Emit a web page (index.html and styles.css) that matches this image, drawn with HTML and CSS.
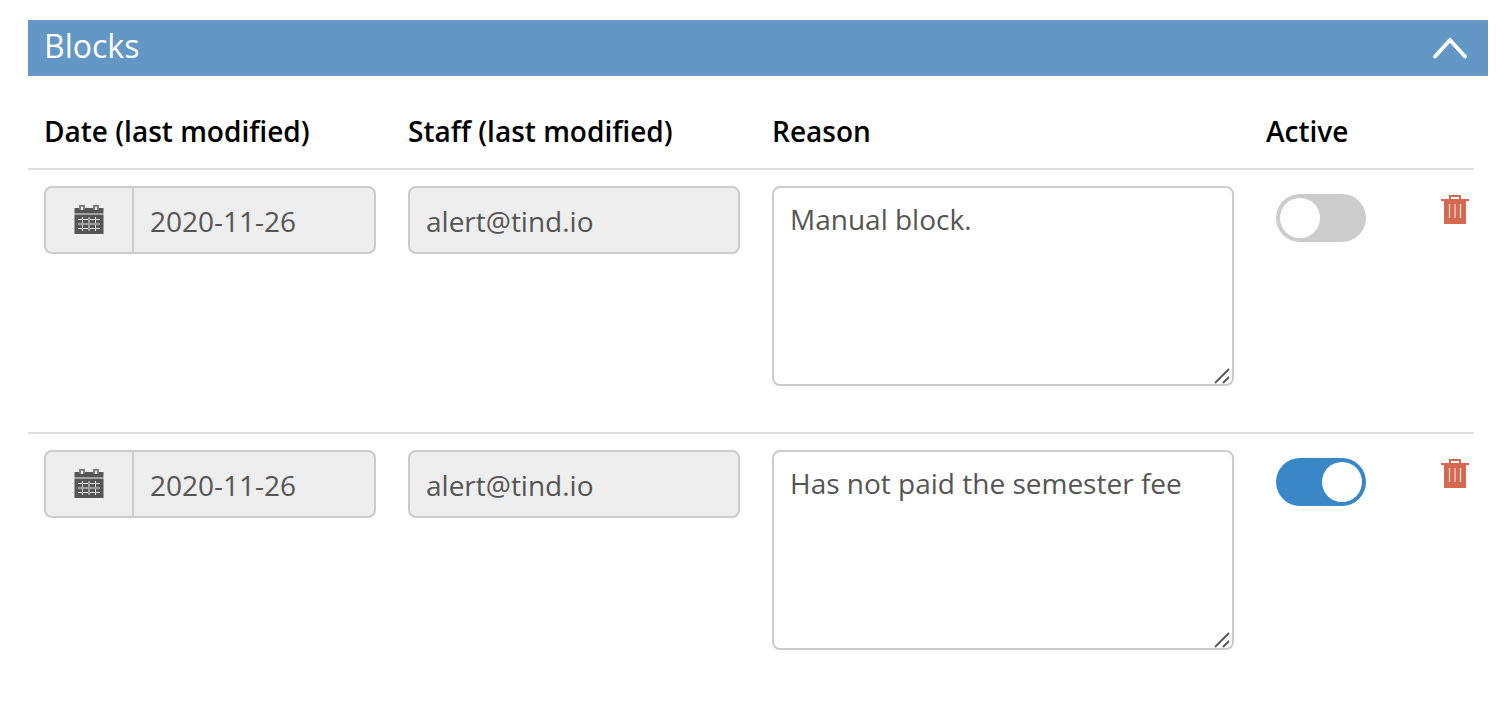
FILE: index.html
```html
<!DOCTYPE html>
<html lang="en">
<head>
    <meta charset="utf-8">
    <title>Blocks</title>
    <link rel="stylesheet" href="styles.css">
</head>
<body>
    <!-- Shared icons -->
    <svg class="icon-defs" aria-hidden="true">
        <symbol id="icon-calendar" viewBox="0 0 30 30">
            <path d="M0.5 4H29.5V9.5H0.5Z" fill="#555"/>
            <path d="M0.5 10.5H29.5V30H0.5Z" fill="#555"/>
            <path d="M6 6V1.8H10V6M20 6V1.8H24V6" fill="#eee" stroke="#777" stroke-width="1.8"/>
            <path d="M7 3H9V6H7ZM21 3H23V6H21Z" fill="#eee"/>
            <path d="M4 15.5H26M4 24.5H26M8.5 13V27M21.5 13V27" fill="none" stroke="#e4e4e4" stroke-width="1"/>
            <path d="M4 20H26M15 13V27" fill="none" stroke="#a0a0a0" stroke-width="2"/>
        </symbol>
        <symbol id="icon-trash" viewBox="0 0 28 30">
            <path d="M9 5V2H19V5" fill="none" stroke="#d4694f" stroke-width="2"/>
            <path d="M0 5H28V7H0Z" fill="#d4694f"/>
            <path d="M3 5H25V30H3Z" fill="#d4694f"/>
            <path d="M8.5 10V24M19.5 10V24" stroke="#f9e9e5" stroke-width="1.2"/>
            <path d="M14 10V24" stroke="#eaaea0" stroke-width="2"/>
        </symbol>
        <symbol id="icon-grip" viewBox="0 0 16 16">
            <path d="M1 15L15 1M9 15L15 9" fill="none" stroke="#555" stroke-width="1.8"/>
        </symbol>
    </svg>

    <section class="panel">
        <div class="panel-header">
            <h2>Blocks</h2>
            <button type="button" class="collapse-btn" aria-label="Collapse">
                <svg width="36" height="24" viewBox="0 0 36 24">
                    <path d="M3 20.5L18 4L33 20.5" fill="none" stroke="#fff" stroke-width="3.8" stroke-linecap="round"/>
                </svg>
            </button>
        </div>

        <table class="blocks">
            <thead>
                <tr>
                    <th class="col-date">Date (last modified)</th>
                    <th class="col-staff">Staff (last modified)</th>
                    <th class="col-reason">Reason</th>
                    <th class="col-active">Active</th>
                    <th class="col-delete"></th>
                </tr>
            </thead>
            <tbody>
                <tr>
                    <td>
                        <div class="input-group">
                            <label for="date1" class="addon" aria-label="Date"><svg class="icon"><use href="#icon-calendar"/></svg></label>
                            <input type="text" id="date1" value="2020-11-26" readonly>
                        </div>
                    </td>
                    <td><input type="text" class="staff" aria-label="Staff" value="alert@tind.io" readonly></td>
                    <td>
                        <div class="reason">
                            <textarea aria-label="Reason">Manual block.</textarea>
                            <svg class="grip"><use href="#icon-grip"/></svg>
                        </div>
                    </td>
                    <td class="active-cell"><input type="checkbox" class="switch" aria-label="Active"></td>
                    <td class="delete-cell">
                        <button type="button" class="delete-btn" aria-label="Delete"><svg class="trash"><use href="#icon-trash"/></svg></button>
                    </td>
                </tr>
                <tr>
                    <td>
                        <div class="input-group">
                            <label for="date2" class="addon" aria-label="Date"><svg class="icon"><use href="#icon-calendar"/></svg></label>
                            <input type="text" id="date2" value="2020-11-26" readonly>
                        </div>
                    </td>
                    <td><input type="text" class="staff" aria-label="Staff" value="alert@tind.io" readonly></td>
                    <td>
                        <div class="reason">
                            <textarea aria-label="Reason">Has not paid the semester fee</textarea>
                            <svg class="grip"><use href="#icon-grip"/></svg>
                        </div>
                    </td>
                    <td class="active-cell"><input type="checkbox" class="switch" aria-label="Active" checked></td>
                    <td class="delete-cell">
                        <button type="button" class="delete-btn" aria-label="Delete"><svg class="trash"><use href="#icon-trash"/></svg></button>
                    </td>
                </tr>
            </tbody>
        </table>
    </section>
</body>
</html>
```
FILE: styles.css
```css
* {
    box-sizing: border-box;
}

body {
    font-family: "Open Sans", "Noto Sans", sans-serif;
    font-size: 28px;
    line-height: 38px;
    background-color: #fff;
    color: #000;
    margin: 0;
    padding: 20px 24px 20px 28px;
}

.icon-defs {
    display: none;
}

.panel-header {
    display: flex;
    justify-content: space-between;
    align-items: center;
    height: 56px;
    padding: 0 20px 0 16px;
    background-color: #6398c6;
    color: #fff;
}

h2 {
    margin: 0;
    padding-bottom: 4px;
    font-size: 32px;
    font-weight: normal;
}

button {
    display: block;
    padding: 0;
    border: none;
    background: none;
    cursor: pointer;
}

button svg {
    display: block;
}

.blocks {
    width: calc(100% - 14px);
    margin-top: 20px;
    table-layout: fixed;
    border-collapse: separate;
    border-spacing: 0;
}

th {
    padding: 16px 16px 18px;
    text-align: left;
    font-weight: 600;
    white-space: nowrap;
}

td {
    padding: 16px 16px 46px;
    border-top: 2px solid #ddd;
    vertical-align: top;
}

.col-date,
.col-staff {
    width: 364px;
}

.col-active {
    width: 132px;
}

.col-delete {
    width: 92px;
}

input[type="text"],
textarea {
    display: block;
    width: 100%;
    font-family: inherit;
    font-size: 28px;
    line-height: 38px;
    color: #555;
    border: 2px solid #ccc;
    border-radius: 8px;
}

input[type="text"] {
    height: 68px;
    padding: 2px 16px 0;
    background-color: #eee;
}

.input-group {
    display: flex;
}

.addon {
    display: flex;
    flex: none;
    align-items: center;
    justify-content: center;
    width: 88px;
    padding-bottom: 2px;
    border: 2px solid #ccc;
    border-right: none;
    border-radius: 8px 0 0 8px;
    background-color: #eee;
}

.icon {
    width: 30px;
    height: 30px;
}

.input-group input[type="text"] {
    flex: 1;
    min-width: 0;
    border-radius: 0 8px 8px 0;
}

.reason {
    position: relative;
}

textarea {
    height: 200px;
    padding: 12px 16px;
    background-color: #fff;
    resize: vertical;
}

textarea::-webkit-resizer {
    display: none;
}

.grip {
    position: absolute;
    right: 4px;
    bottom: 2px;
    width: 16px;
    height: 16px;
    pointer-events: none;
}

.active-cell {
    padding: 24px 16px 0 26px;
}

.switch {
    appearance: none;
    display: block;
    width: 90px;
    height: 48px;
    margin: 0;
    padding: 4px;
    border-radius: 24px;
    background-color: #ccc;
    cursor: pointer;
}

.switch::before {
    content: "";
    display: block;
    width: 40px;
    height: 40px;
    border-radius: 50%;
    background-color: #fff;
}

.switch:checked {
    background-color: #3a87c8;
}

.switch:checked::before {
    margin-left: auto;
}

.delete-cell {
    padding: 24px 5px 0 16px;
}

.delete-btn {
    margin-left: auto;
}

.trash {
    width: 28px;
    height: 30px;
}
```
